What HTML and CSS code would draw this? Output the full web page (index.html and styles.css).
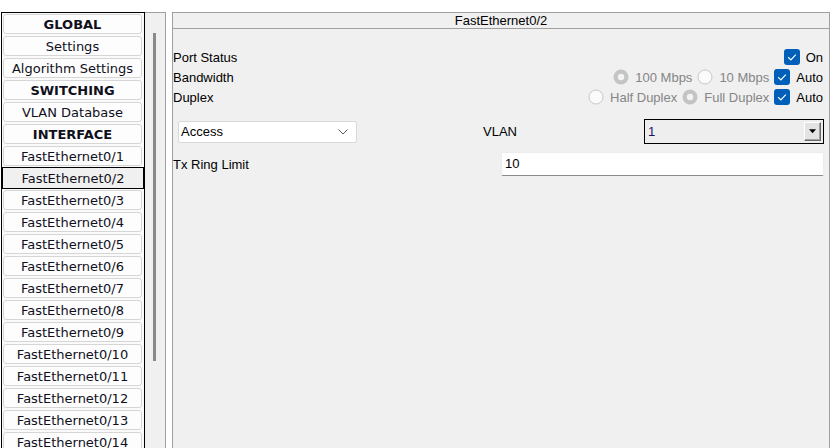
FILE: index.html
```html
<!DOCTYPE html>
<html>
<head>
<meta charset="utf-8">
<link rel="stylesheet" href="styles.css">
</head>
<body>
<div class="app">
  <div class="list">
    <div class="item head">GLOBAL</div>
    <div class="item">Settings</div>
    <div class="item">Algorithm Settings</div>
    <div class="item head">SWITCHING</div>
    <div class="item">VLAN Database</div>
    <div class="item head">INTERFACE</div>
    <div class="item">FastEthernet0/1</div>
    <div class="item selected">FastEthernet0/2</div>
    <div class="item">FastEthernet0/3</div>
    <div class="item">FastEthernet0/4</div>
    <div class="item">FastEthernet0/5</div>
    <div class="item">FastEthernet0/6</div>
    <div class="item">FastEthernet0/7</div>
    <div class="item">FastEthernet0/8</div>
    <div class="item">FastEthernet0/9</div>
    <div class="item">FastEthernet0/10</div>
    <div class="item">FastEthernet0/11</div>
    <div class="item">FastEthernet0/12</div>
    <div class="item">FastEthernet0/13</div>
    <div class="item">FastEthernet0/14</div>
  </div>
  <div class="scroll"><div class="thumb"></div></div>
  <div class="panel">
    <div class="title">FastEthernet0/2</div>
    <div class="body">
      <div class="row">
        <span class="label">Port Status</span>
        <div class="ctrls">
          <label class="opt"><svg class="cb" viewBox="0 0 16 16"><rect x="0" y="0" width="16" height="16" rx="3" fill="#005fb8"/><path d="M4.2 8.3 L6.9 10.9 L11.8 5.6" fill="none" stroke="#fff" stroke-width="1.2"/></svg><span>On</span></label>
        </div>
      </div>
      <div class="row">
        <span class="label">Bandwidth</span>
        <div class="ctrls">
          <label class="opt dis"><svg class="rb" viewBox="0 0 16 16"><circle cx="8" cy="8" r="7.5" fill="#c4c4c4"/><circle cx="8" cy="8" r="3.2" fill="#f3f3f3"/></svg><span>100 Mbps</span></label>
          <label class="opt dis"><svg class="rb" viewBox="0 0 16 16"><circle cx="8" cy="8" r="7" fill="#fbfbfb" stroke="#c8c8c8" stroke-width="1"/></svg><span>10 Mbps</span></label>
          <label class="opt"><svg class="cb" viewBox="0 0 16 16"><rect x="0" y="0" width="16" height="16" rx="3" fill="#005fb8"/><path d="M4.2 8.3 L6.9 10.9 L11.8 5.6" fill="none" stroke="#fff" stroke-width="1.2"/></svg><span>Auto</span></label>
        </div>
      </div>
      <div class="row">
        <span class="label">Duplex</span>
        <div class="ctrls">
          <label class="opt dis"><svg class="rb" viewBox="0 0 16 16"><circle cx="8" cy="8" r="7" fill="#fbfbfb" stroke="#c8c8c8" stroke-width="1"/></svg><span>Half Duplex</span></label>
          <label class="opt dis"><svg class="rb" viewBox="0 0 16 16"><circle cx="8" cy="8" r="7.5" fill="#c4c4c4"/><circle cx="8" cy="8" r="3.2" fill="#f3f3f3"/></svg><span>Full Duplex</span></label>
          <label class="opt"><svg class="cb" viewBox="0 0 16 16"><rect x="0" y="0" width="16" height="16" rx="3" fill="#005fb8"/><path d="M4.2 8.3 L6.9 10.9 L11.8 5.6" fill="none" stroke="#fff" stroke-width="1.2"/></svg><span>Auto</span></label>
        </div>
      </div>
      <div class="combo-row">
        <div class="combo">
          <span>Access</span>
          <svg class="chev" viewBox="0 0 10 6"><path d="M0.5 0.5 L5 5 L9.5 0.5" fill="none" stroke="#5a5a5a" stroke-width="1"/></svg>
        </div>
        <span class="vlan-label">VLAN</span>
        <div class="vlan-select">
          <span class="vlan-val">1</span>
          <div class="vlan-btn"><svg viewBox="0 0 8 5" class="tri"><path d="M0 0 H8 L4 4.5 Z" fill="#000"/></svg></div>
        </div>
      </div>
      <div class="tx-row">
        <span class="label">Tx Ring Limit</span>
        <div class="tx-input">10</div>
      </div>
    </div>
  </div>
</div>
</body>
</html>
```

FILE: styles.css
```css
html, body {
  margin: 0;
  padding: 0;
  background: #ffffff;
  overflow: hidden;
  width: 838px;
  height: 448px;
}

.app {
  display: flex;
  align-items: flex-start;
  padding-top: 12px;
  height: 436px;
  overflow: hidden;
}

.list {
  margin-left: 1px;
  width: 144px;
  height: 460px;
  box-sizing: border-box;
  border: 1px solid #000;
  border-bottom: none;
  background: #fafafa;
  padding: 1px 2px 0 1px;
  display: flex;
  flex-direction: column;
  gap: 2px;
  flex-shrink: 0;
}

.item {
  height: 20px;
  box-sizing: border-box;
  border: 1px solid #d6d6d6;
  border-radius: 3px;
  background: #fdfdfd;
  font-family: "DejaVu Sans", Verdana, sans-serif;
  font-size: 13px;
  line-height: 19px;
  text-align: center;
  color: #10101c;
  white-space: nowrap;
  flex-shrink: 0;
}

.item.head {
  font-weight: bold;
}

.item.selected {
  height: 22px;
  margin: -1px -2px -1px -1px;
  border: 1px solid #000;
  border-radius: 0;
  background: #f0f0f0;
  line-height: 21px;
}

.scroll {
  width: 21px;
  height: 460px;
  box-sizing: border-box;
  border-top: 1px solid #a0a0a0;
  border-right: 1px solid #a0a0a0;
  background: #f0f0f0;
  flex-shrink: 0;
}

.thumb {
  margin-top: 20px;
  margin-left: 8px;
  width: 3px;
  height: 328px;
  background: #8a8a8a;
}

.panel {
  margin-left: 6px;
  width: 658px;
  height: 460px;
  box-sizing: border-box;
  border: 1px solid #a0a0a0;
  border-bottom: none;
  background: #f0f0f0;
  flex-shrink: 0;
  font-family: "Liberation Sans", Arial, sans-serif;
  font-size: 13px;
  color: #000;
}

.title {
  height: 16px;
  box-sizing: border-box;
  border-bottom: 1px solid #a0a0a0;
  line-height: 15px;
  text-align: center;
}

.body {
  padding: 18px 5px 0 0;
}

.row {
  display: flex;
  align-items: center;
  justify-content: space-between;
  height: 20px;
}

.label {
  white-space: nowrap;
}

.ctrls {
  display: flex;
  align-items: center;
  gap: 5px;
  padding-right: 1px;
}

.opt {
  display: inline-flex;
  align-items: center;
  gap: 6px;
  white-space: nowrap;
}

.opt.dis {
  color: #858585;
}

.cb, .rb {
  width: 16px;
  height: 16px;
  display: block;
  flex-shrink: 0;
}

.combo-row {
  display: flex;
  align-items: center;
  height: 25px;
  margin-top: 12px;
}

.combo {
  margin-left: 5px;
  width: 179px;
  height: 22px;
  box-sizing: border-box;
  border: 1px solid #d9d9d9;
  border-radius: 2px;
  background: #fff;
  display: flex;
  align-items: center;
  justify-content: space-between;
  padding: 0 8px 0 2px;
}

.chev {
  width: 10px;
  height: 6px;
  display: block;
}

.vlan-label {
  margin-left: 126px;
}

.vlan-select {
  margin-left: auto;
  width: 180px;
  height: 25px;
  box-sizing: border-box;
  border: 1px solid #000;
  background: #eeeeee;
  display: flex;
  align-items: center;
  justify-content: space-between;
  padding: 0 2px 0 3px;
}

.vlan-val {
  color: #1a1466;
}

.vlan-btn {
  width: 17px;
  height: 19px;
  box-sizing: border-box;
  background: #e3e3e3;
  border-top: 1px solid #ffffff;
  border-left: 1px solid #ffffff;
  border-right: 1px solid #6a6a6a;
  border-bottom: 1px solid #6a6a6a;
  box-shadow: inset -1px -1px 0 #a0a0a0;
  display: flex;
  align-items: center;
  justify-content: center;
}

.tri {
  width: 7px;
  height: 5px;
  display: block;
}

.tx-row {
  display: flex;
  align-items: center;
  justify-content: space-between;
  height: 24px;
  margin-top: 8px;
}

.tx-input {
  width: 323px;
  height: 24px;
  box-sizing: border-box;
  background: #fff;
  border: 1px solid #ececec;
  border-bottom: 1px solid #8a8a8a;
  border-radius: 2px;
  padding-left: 3px;
  line-height: 22px;
}
```
